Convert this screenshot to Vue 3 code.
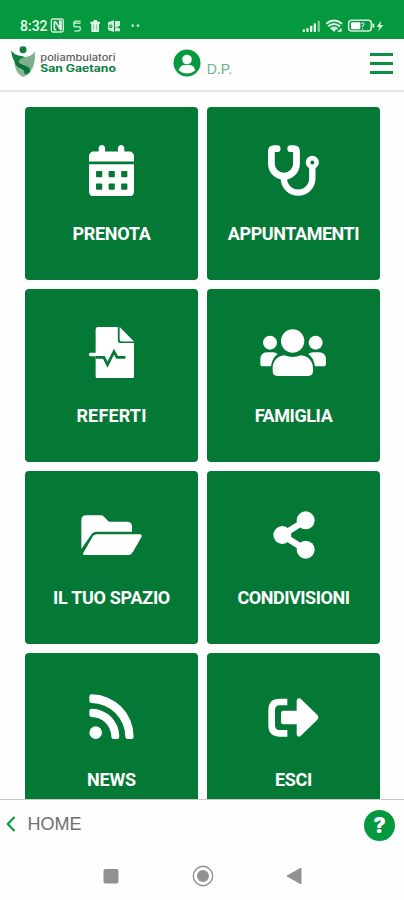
<template>
  <div class="screen">
    <div class="status-bar">
      <span class="clock">8:32</span>
      <svg class="status-left" viewBox="150 50 275 50" width="91.7" height="16.7">
        <rect x="154" y="56" width="36" height="39" rx="5" fill="none" stroke="#d3efdc" stroke-width="4" />
        <path d="M163 88V65h4l13 20V63M163 88h6M176 63h7v26" fill="none" stroke="#e2f6e8" stroke-width="5" />
        <path d="M242 63h-15q-6 0-6 8t6 8h9q5 0 5 6t-6 7h-12M221 79h20M222 69h20" fill="none" stroke="#b5e2c3" stroke-width="4.500" />
        <path d="M271 64h8l3-5h8l3 5h7v6h-3v25h-23V70h-3z" fill="#e2f6e8" />
        <path d="M281 72v17M290 72v17" stroke="#7fc99a" stroke-width="3" />
        <path d="M324 66l18-6v35l-18-6zM345 62h15v14l-15 6zM345 84l8-3 7 5v7h-15z" fill="#d3efdc" />
        <circle cx="332" cy="78" r="4" fill="none" stroke="#07993f" stroke-width="3" />
        <circle cx="398" cy="76" r="4" fill="#c0e8cd" />
        <circle cx="414" cy="76" r="4" fill="#c0e8cd" />
      </svg>
      <svg class="status-right" viewBox="300 50 250 50" width="83.3" height="16.7">
        <g fill="#e2f6e8">
          <rect x="305" y="87" width="7" height="8" rx="2" />
          <rect x="316" y="83" width="7" height="12" rx="2" />
          <rect x="327" y="76" width="7" height="19" rx="2" />
          <rect x="338" y="69" width="7" height="26" rx="2" />
          <rect x="350" y="61" width="7" height="34" rx="2" fill="#79cb97" />
        </g>
        <g fill="none" stroke="#e2f6e8" stroke-width="6">
          <path d="M376 70q23-19 47 0M382 78q17-14 35 0M389 86q10-9 21 0" />
        </g>
        <path d="M392 87q8-5 14 0l-7 8zM408 94l14-11v11z" fill="#e2f6e8" />
        <rect x="443" y="60" width="68" height="32" rx="9" fill="none" stroke="#d3efdc" stroke-width="4.500" />
        <rect x="450" y="66" width="28" height="21" rx="3" fill="#fff" />
        <path d="M514 70h6v12h-6z" fill="#e2f6e8" />
        <path d="M480 69q9-4 9 3l-6 8M483 86h4" stroke="#a5d8dc" stroke-width="4" fill="none" />
        <path d="M541 61l-14 18h9l-5 15 16-20h-9z" fill="#e2f6e8" />
      </svg>
    </div>

    <header class="header">
      <svg class="logo" viewBox="30 135 322 100" width="107.3" height="33.3">
        <path d="M33 151q10 15 26 16 9 0 18 5-11 8-4 17 16 10 20 17-22-11-43-15-13-7-17-40z" fill="#12803f" />
        <path d="M104 154q-7 14-23 16-19 2-25 13-1 7 13 13 18 8 26 14 13-24 9-56z" fill="#7fae8f" />
        <path d="M43 187q16 6 35 11 19 7 13 18-6 10-22 15-23-9-26-44z" fill="#87b795" />
        <path d="M53 172q-8 17 17 23 27 8 19 21-5 7-17 7 6-8-7-16-26-10-19-25z" fill="#0b7238" />
        <circle cx="69" cy="149" r="10.500" fill="#0b7d3c" />
        <text x="121" y="182" class="logo-top" textLength="226" lengthAdjust="spacingAndGlyphs">poliambulatori</text>
        <text x="121" y="215" class="logo-bottom" textLength="227" lengthAdjust="spacingAndGlyphs">San Gaetano</text>
      </svg>
      <div class="user">
        <svg viewBox="0 0 28 28" width="28" height="28">
          <circle cx="14" cy="14" r="13.500" fill="#07993f" />
          <circle cx="14" cy="10.500" r="4.800" fill="#fff" />
          <path d="M5.800 21.500q1-5.500 6-5.500h4.400q5 0 6 5.500Q18.500 24.500 14 24.500t-8.200-3z" fill="#fff" />
        </svg>
        <span class="user-name">D.P.</span>
      </div>
      <button class="menu" aria-label="Menu">
        <span></span>
        <span></span>
        <span></span>
      </button>
    </header>

    <main class="content">
      <div class="grid">
        <div v-for="tile in tiles" :key="tile.label" class="tile">
          <div class="tile-icon">
            <svg :viewBox="tile.viewBox" :width="tile.width" :height="tile.height">
              <template v-if="tile.icon === 'calendar'">
                <path d="M128 0c18 0 32 14 32 32v32h128V32c0-18 14-32 32-32s32 14 32 32v32h48c27 0 48 21 48 48v52H0v-52c0-27 21-48 48-48h48V32c0-18 14-32 32-32zM0 192h448v272c0 27-21 48-48 48H48c-27 0-48-21-48-48z" />
                <g class="cut">
                  <rect v-for="n in 6" :key="n" :x="70 + ((n - 1) % 3) * 125" :y="n > 3 ? 384 : 258" width="62" height="62" rx="10" />
                </g>
              </template>
              <g v-else-if="tile.icon === 'stethoscope'" class="line">
                <path d="M92 37H62Q34 37 34 65v122a126 126 0 0 0 252 0V65q0-28-28-28h-30" stroke-width="68" stroke-linecap="round" />
                <path d="M160 325v11a142 142 0 0 0 285 0V225" stroke-width="64" />
                <circle cx="445" cy="175" r="43" stroke-width="46" />
              </g>
              <template v-else-if="tile.icon === 'report'">
                <path d="M90 0h197v137q0 23 23 23h138v328q0 24-24 24H90q-24 0-24-24V24Q66 0 90 0zM305 0l143 143H325q-20 0-20-20zM12 256h80v34H12Q0 290 0 273t12-17z" />
                <path class="cut-line" d="M66 302h82l36 73 65-129 31 56h83" />
              </template>
              <template v-else-if="tile.icon === 'family'">
                <circle cx="274" cy="168" r="35" />
                <circle cx="206" cy="173" r="21" />
                <circle cx="343" cy="173" r="21" />
                <path d="M197 202h17q9 0 15 5-17 12-20 37h-24q-8 0-8-8v-11q0-23 20-23zM353 202h-17q-9 0-15 5 17 12 20 37h25q8 0 8-8v-11q0-23-21-23z" />
                <path d="M249 211q25 10 50 0c22 2 36 18 36 38v10q0 14-14 14h-93q-14 0-14-14v-10c0-20 14-36 35-38z" />
              </template>
              <template v-else-if="tile.icon === 'folder'">
                <path d="M184 242v-86q0-15 15-15h43q6 0 10 4l15 15h54q15 0 15 14v16H232q-13 0-19 10z" />
                <path d="M232 198h126q11 0 6 9l-24 42q-7 12-17 12H197q-11 0-6-9l25-44q5-10 16-10z" />
              </template>
              <template v-else-if="tile.icon === 'share'">
                <path class="link" d="M310 156l-70 44 70 45" />
                <circle cx="240" cy="200" r="27" />
                <circle cx="310" cy="156" r="27" />
                <circle cx="310" cy="244" r="27" />
              </template>
              <template v-else-if="tile.icon === 'rss'">
                <circle cx="228" cy="249" r="19" />
                <path d="M209 183q0-6 7-6a84 84 0 0 1 83 84q0 7-6 7h-11q-7 0-7-7a60 60 0 0 0-59-59q-7 0-7-7z" />
                <path d="M209 140q0-6 7-6a127 127 0 0 1 126 127q0 7-6 7h-12q-6 0-7-7a102 102 0 0 0-101-101q-7 0-7-7z" />
              </template>
              <template v-else>
                <path class="bracket" d="M258 155h-23q-24 0-24 24v46q0 24 24 24h23" />
                <path d="M246 181h40v-30q0-7 7-7 4 0 8 4l47 46q6 7 0 14l-47 46q-4 5-8 5-7 0-7-7v-30h-40q-7 0-7-7v-27q0-7 7-7z" />
              </template>
            </svg>
          </div>
          <div class="tile-label" :style="{ letterSpacing: tile.spacing + 'px' }">{{ tile.label }}</div>
        </div>
      </div>
    </main>

    <footer class="footer">
      <a class="back">
        <svg viewBox="0 0 10 16" width="10" height="16">
          <path d="M8.500 1L1.800 8l6.700 7" fill="none" stroke="#0b9a45" stroke-width="2.200" />
        </svg>
        <span>HOME</span>
      </a>
      <span class="help">?</span>
    </footer>

    <nav class="system-nav">
      <svg viewBox="0 0 16 16" width="16" height="16"><rect x="0.500" y="1" width="15" height="14.500" rx="2" fill="#929292" /></svg>
      <svg viewBox="0 0 22 22" width="22" height="22">
        <circle cx="11" cy="11" r="9.700" fill="none" stroke="#929292" stroke-width="1.400" />
        <circle cx="11" cy="11" r="6" fill="#929292" />
      </svg>
      <svg viewBox="0 0 16 18" width="16" height="18"><path d="M15 1v16L1 9z" fill="#929292" stroke="#929292" stroke-linejoin="round" /></svg>
    </nav>
  </div>
</template>

<script setup>
const tiles = [
  { label: 'PRENOTA', icon: 'calendar', viewBox: '0 0 448 512', width: 45, height: 51.5, spacing: -0.3 },
  { label: 'APPUNTAMENTI', icon: 'stethoscope', viewBox: '0 0 512 512', width: 51, height: 51, spacing: -0.45 },
  { label: 'REFERTI', icon: 'report', viewBox: '0 0 448 512', width: 45, height: 51.5, spacing: 0.15 },
  { label: 'FAMIGLIA', icon: 'family', viewBox: '176 132 199 142', width: 66.3, height: 47.3, spacing: -0.4 },
  { label: 'IL TUO SPAZIO', icon: 'folder', viewBox: '183 140 183 122', width: 61, height: 40.7, spacing: -0.3 },
  { label: 'CONDIVISIONI', icon: 'share', viewBox: '212 128 126 144', width: 42, height: 48, spacing: -0.45 },
  { label: 'NEWS', icon: 'rss', viewBox: '208 133 135 136', width: 45, height: 45.3, spacing: -0.2 },
  { label: 'ESCI', icon: 'exit', viewBox: '200 143 152 117', width: 50.7, height: 39, spacing: -0.3 }
]
</script>

<style>
body {
  margin: 0;
  background: #fefefe;
}
</style>

<style scoped>
.screen {
  width: 404px;
  height: 900px;
  display: flex;
  flex-direction: column;
  overflow: hidden;
  background: #fefefe;
  font-family: "Liberation Sans", sans-serif;
}

.status-bar {
  flex: none;
  display: flex;
  align-items: flex-start;
  height: 39px;
  padding: 17px 20px 0;
  box-sizing: border-box;
  background: #04993f;
}

.clock {
  width: 30px;
  color: #e8fbee;
  font-family: Roboto, sans-serif;
  font-size: 14px;
  font-weight: 500;
  line-height: 18px;
  white-space: nowrap;
}

.status-right {
  margin-left: auto;
}

.header {
  flex: none;
  display: flex;
  align-items: flex-start;
  height: 53px;
  padding: 6px 11px 0 10px;
  box-sizing: border-box;
  background: #fefefe;
  border-bottom: 2px solid #e6e6e6;
}

.logo-top,
.logo-bottom {
  font-family: Inter, sans-serif;
  font-size: 28px;
  fill: #5c5c5c;
}

.logo-top {
  font-weight: 500;
}

.logo-bottom {
  font-size: 29px;
  font-weight: 700;
  fill: #0b8040;
}

.user {
  display: flex;
  margin: 4px 0 0 55.500px;
}

.user-name {
  margin: 11px 0 0 6px;
  color: #6bb48d;
  font-size: 14px;
  line-height: 18px;
}

.menu {
  display: flex;
  flex-direction: column;
  gap: 6px;
  width: 23px;
  margin: 8px 0 0 auto;
  padding: 0;
  border: 0;
  background: none;
}

.menu span {
  height: 3px;
  background: #0d9040;
}

.content {
  flex: none;
  height: 706.500px;
  overflow: hidden;
  border-bottom: 1px solid #c9c9c9;
}

.grid {
  display: grid;
  grid-template-columns: 173px 173px;
  grid-auto-rows: 173.500px;
  gap: 8.700px 9px;
  padding: 14.500px 25px 0;
}

.tile {
  border-radius: 4px;
  background: #047835;
  color: #fff;
}

.tile-icon {
  display: flex;
  align-items: center;
  justify-content: center;
  height: 128px;
}

.tile-icon svg {
  fill: #fff;
}

.tile-icon .cut {
  fill: #047835;
}

.tile-icon .cut-line {
  fill: none;
  stroke: #047835;
  stroke-width: 27;
}

.tile-icon .line {
  fill: none;
  stroke: #fff;
}

.tile-icon .link {
  fill: none;
  stroke: #fff;
  stroke-width: 19;
}

.tile-icon .bracket {
  fill: none;
  stroke: #fff;
  stroke-width: 20;
}

.tile-label {
  margin-top: -12.600px;
  font-family: Roboto, sans-serif;
  font-size: 18px;
  font-weight: 700;
  line-height: 24px;
  text-align: center;
  white-space: nowrap;
}

.footer {
  flex: none;
  display: flex;
  justify-content: space-between;
  height: 55px;
  padding: 10px 9px 0 6px;
  box-sizing: border-box;
}

.back {
  display: flex;
  align-items: center;
  gap: 11.500px;
  height: 29px;
  color: #707070;
  font-size: 18px;
}

.help {
  width: 31px;
  height: 31px;
  border-radius: 50%;
  background: #04993f;
  color: #fff;
  font-family: Inter, sans-serif;
  font-size: 21px;
  font-weight: 900;
  line-height: 31px;
  text-align: center;
}

.system-nav {
  display: flex;
  align-items: center;
  justify-content: space-between;
  height: 42px;
  padding: 0 102px 0 103px;
}
</style>
